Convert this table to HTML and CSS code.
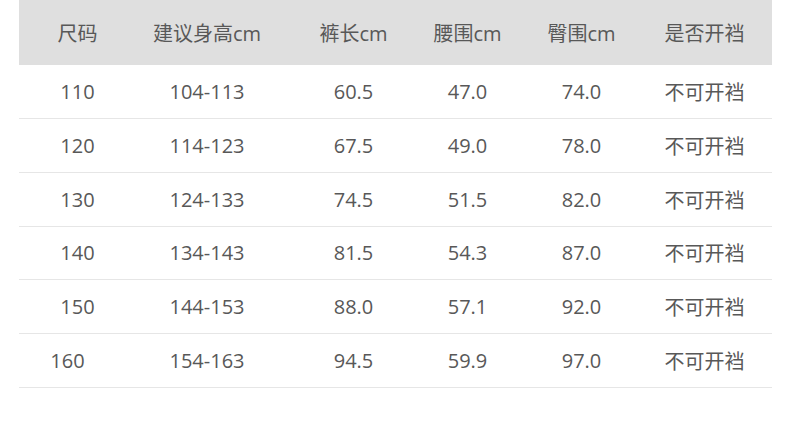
FILE: index.html
```html
<!DOCTYPE html>
<html lang="zh-CN">
<head>
<meta charset="utf-8">
<title>尺码表</title>
<link rel="stylesheet" href="styles.css">
</head>
<body>
<div class="page">
  <div class="table">
    <div class="row head">
      <div class="c c1">尺码</div><div class="c c2">建议身高cm</div><div class="c c3">裤长cm</div><div class="c c4">腰围cm</div><div class="c c5">臀围cm</div><div class="c c6">是否开裆</div>
    </div>
    <div class="row">
      <div class="c c1">110</div><div class="c c2">104-113</div><div class="c c3">60.5</div><div class="c c4">47.0</div><div class="c c5">74.0</div><div class="c c6">不可开裆</div>
    </div>
    <div class="row">
      <div class="c c1">120</div><div class="c c2">114-123</div><div class="c c3">67.5</div><div class="c c4">49.0</div><div class="c c5">78.0</div><div class="c c6">不可开裆</div>
    </div>
    <div class="row">
      <div class="c c1">130</div><div class="c c2">124-133</div><div class="c c3">74.5</div><div class="c c4">51.5</div><div class="c c5">82.0</div><div class="c c6">不可开裆</div>
    </div>
    <div class="row">
      <div class="c c1">140</div><div class="c c2">134-143</div><div class="c c3">81.5</div><div class="c c4">54.3</div><div class="c c5">87.0</div><div class="c c6">不可开裆</div>
    </div>
    <div class="row">
      <div class="c c1">150</div><div class="c c2">144-153</div><div class="c c3">88.0</div><div class="c c4">57.1</div><div class="c c5">92.0</div><div class="c c6">不可开裆</div>
    </div>
    <div class="row">
      <div class="c c1 shift">160</div><div class="c c2">154-163</div><div class="c c3">94.5</div><div class="c c4">59.9</div><div class="c c5">97.0</div><div class="c c6">不可开裆</div>
    </div>
  </div>
</div>
</body>
</html>
```

FILE: styles.css
```css
html, body {
  margin: 0;
  padding: 0;
  background: #ffffff;
}
.page {
  padding-left: 19px;
  width: 753px;
  font-family: "Open Sans", "Noto Sans CJK SC", sans-serif;
  font-size: 20px;
  color: #585858;
}
.table {
  display: flex;
  flex-direction: column;
}
.row {
  display: flex;
  align-items: center;
  height: 53.85px;
  box-sizing: border-box;
  border-bottom: 1px solid #e6e6e6;
}
.row.head {
  height: 65px;
  background: #dfdfdf;
  border-bottom: none;
}
.c {
  display: flex;
  justify-content: center;
  white-space: nowrap;
  flex: none;
}
.c1 { width: 117px; }
.c2 { width: 142px; }
.c3 { width: 151px; }
.c4 { width: 77px; }
.c5 { width: 151px; }
.c6 { width: 95px; }
.shift { padding-right: 20px; box-sizing: border-box; }
```
